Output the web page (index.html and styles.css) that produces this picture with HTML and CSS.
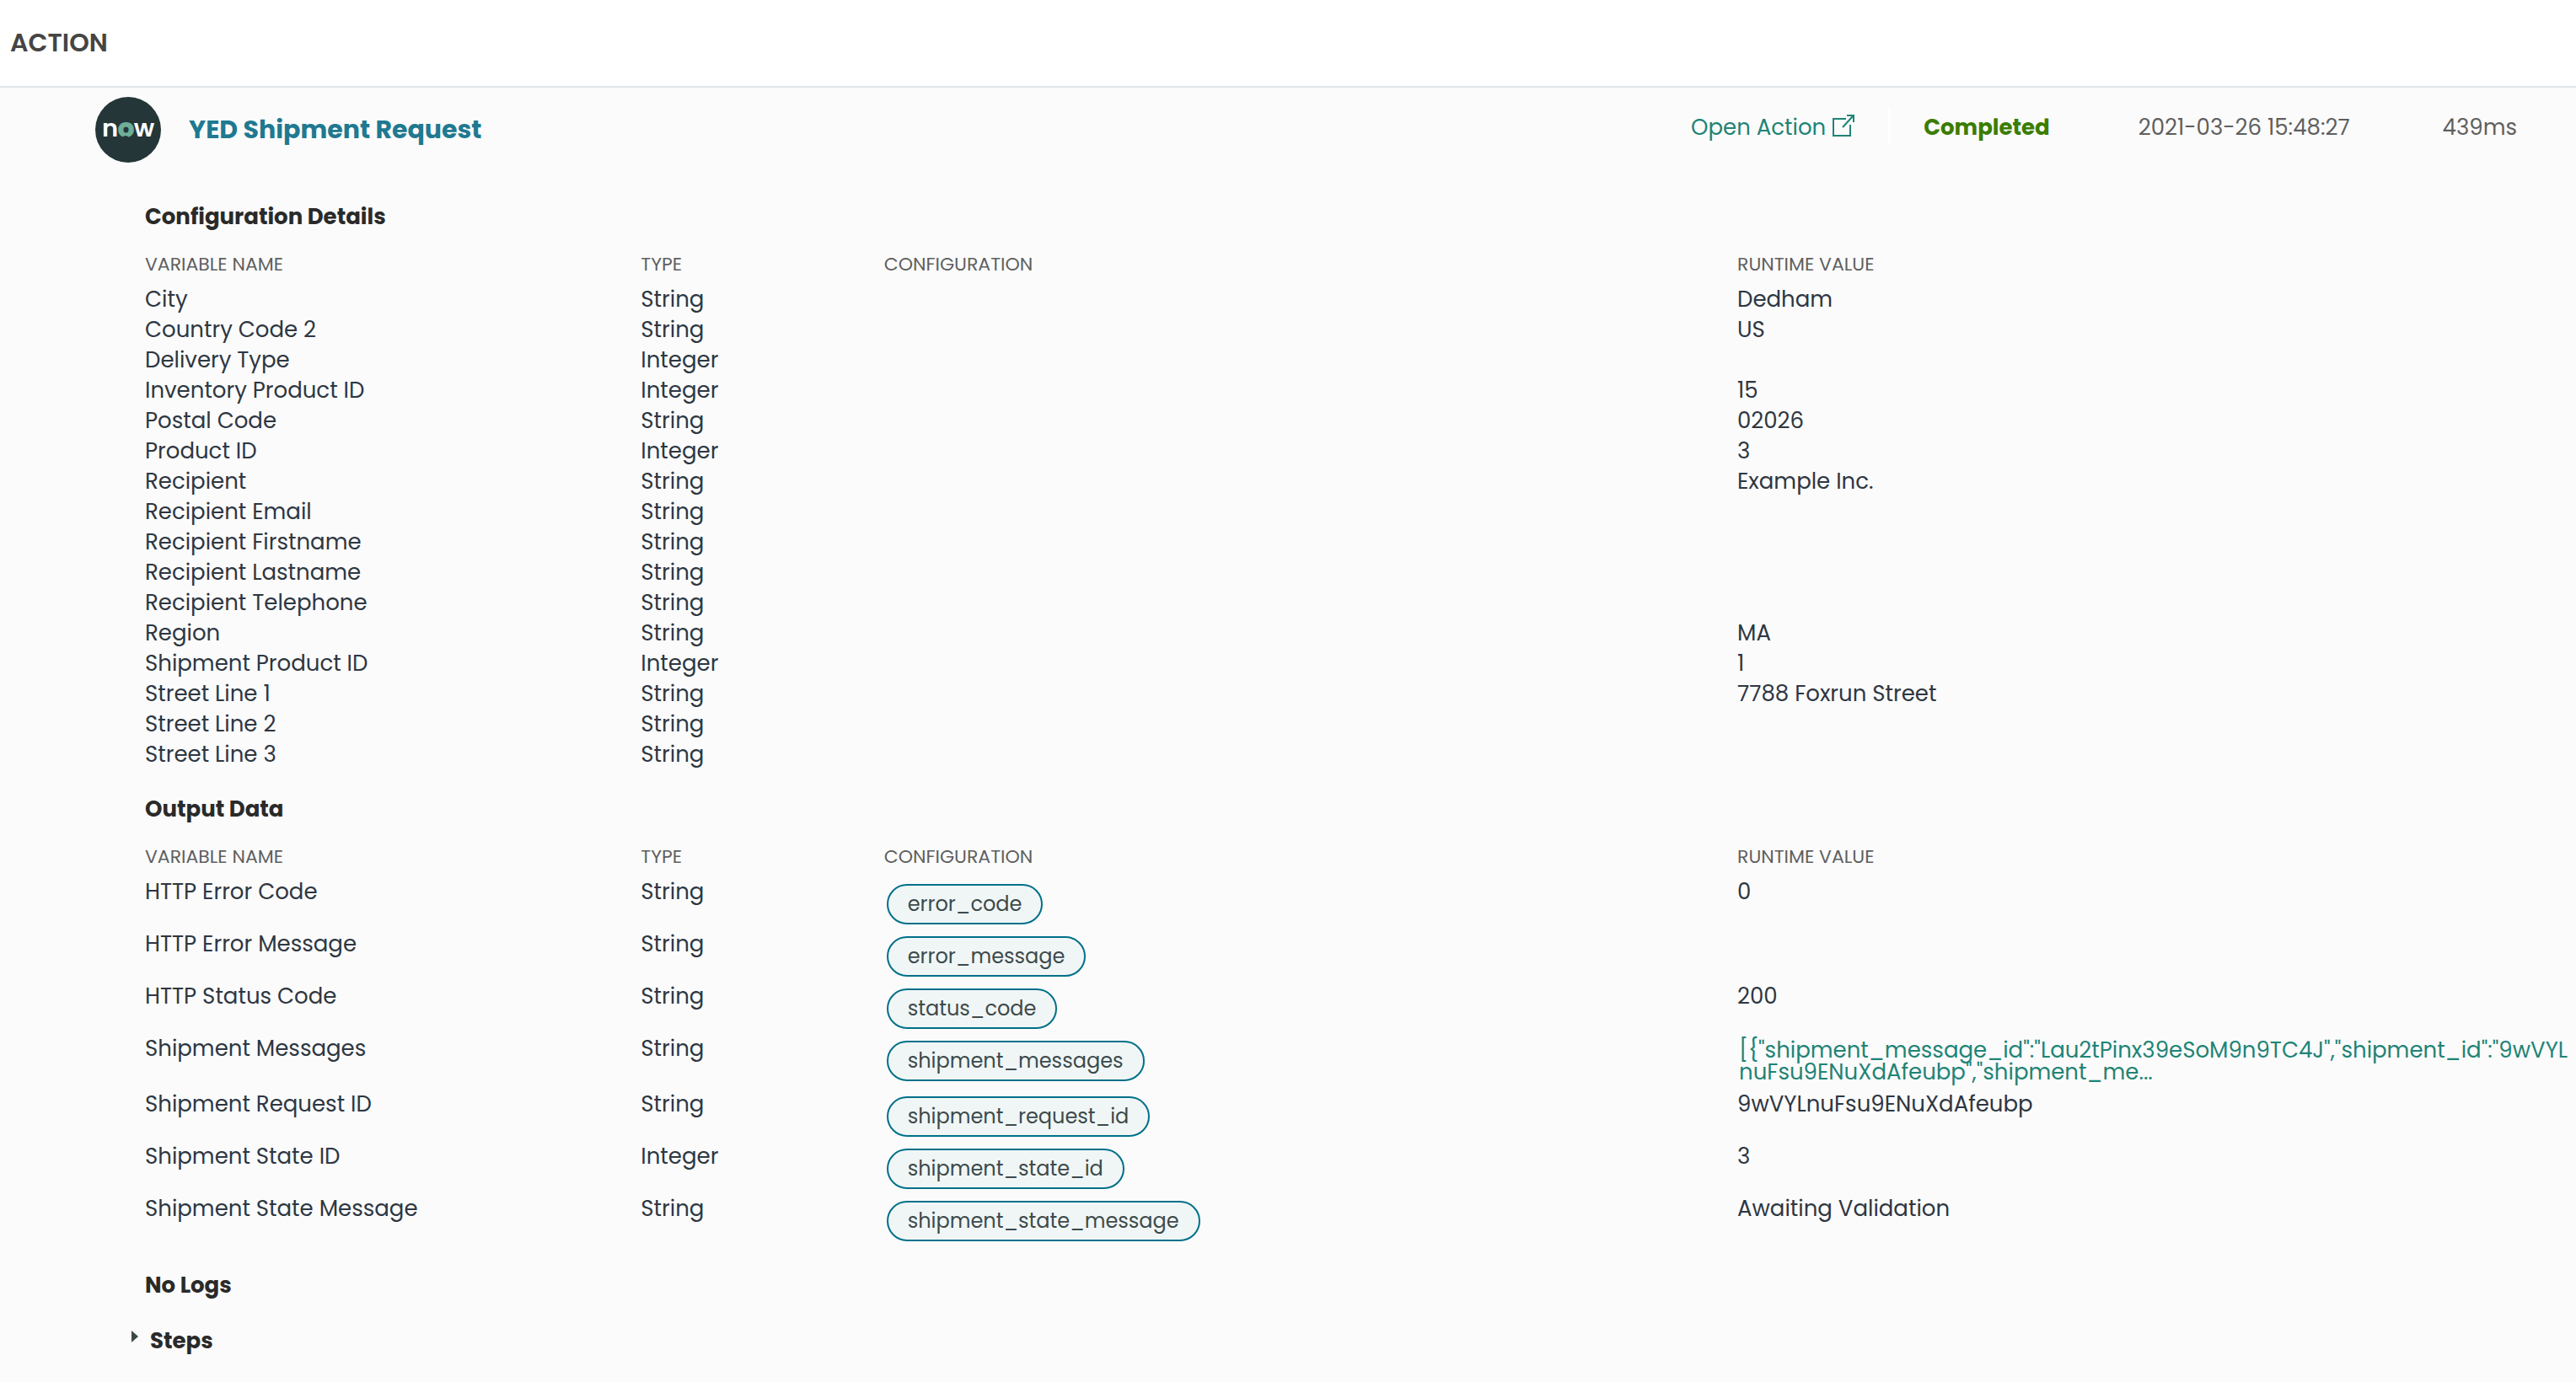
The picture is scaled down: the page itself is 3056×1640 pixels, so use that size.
FILE: index.html
```html
<!DOCTYPE html>
<html lang="en">
<head>
<meta charset="utf-8">
<title>Action – YED Shipment Request</title>
<link rel="stylesheet" href="styles.css">
</head>
<body>
<header class="page-header">
  <h1 class="page-title">ACTION</h1>
</header>
<main class="action">
  <div class="action-bar">
    <svg class="logo" viewBox="0 0 78 78" role="img" aria-label="now">
      <circle cx="39" cy="39" r="39" fill="#243638"/>
      <text class="logo-text" x="8" y="47">n<tspan class="logo-o">o</tspan>w</text>
      <path d="M31 49Q36 43 41 49Z" fill="#243638"/>
    </svg>
    <h2 class="action-name">YED Shipment Request</h2>
    <div class="action-meta">
      <a class="open-action" href="#">Open Action
        <svg class="open-icon" viewBox="0 0 26 26" aria-hidden="true">
          <path d="M16 5H1V25H21V12M12 15L24 2M17 1H25V9" fill="none" stroke="#1f8476" stroke-width="2"/>
        </svg>
      </a>
      <span class="status">Completed</span>
      <time class="started" datetime="2021-03-26T15:48:27">2021-03-26 15:48:27</time>
      <span class="duration">439ms</span>
    </div>
  </div>

  <div class="details">
    <section class="section">
      <h3 class="section-title">Configuration Details</h3>
      <table class="vars">
        <thead>
          <tr><th class="col-name">VARIABLE NAME</th><th class="col-type">TYPE</th><th class="col-config">CONFIGURATION</th><th>RUNTIME VALUE</th></tr>
        </thead>
        <tbody>
          <tr><td>City</td><td>String</td><td></td><td>Dedham</td></tr>
          <tr><td>Country Code 2</td><td>String</td><td></td><td>US</td></tr>
          <tr><td>Delivery Type</td><td>Integer</td><td></td><td></td></tr>
          <tr><td>Inventory Product ID</td><td>Integer</td><td></td><td>15</td></tr>
          <tr><td>Postal Code</td><td>String</td><td></td><td>02026</td></tr>
          <tr><td>Product ID</td><td>Integer</td><td></td><td>3</td></tr>
          <tr><td>Recipient</td><td>String</td><td></td><td>Example Inc.</td></tr>
          <tr><td>Recipient Email</td><td>String</td><td></td><td></td></tr>
          <tr><td>Recipient Firstname</td><td>String</td><td></td><td></td></tr>
          <tr><td>Recipient Lastname</td><td>String</td><td></td><td></td></tr>
          <tr><td>Recipient Telephone</td><td>String</td><td></td><td></td></tr>
          <tr><td>Region</td><td>String</td><td></td><td>MA</td></tr>
          <tr><td>Shipment Product ID</td><td>Integer</td><td></td><td>1</td></tr>
          <tr><td>Street Line 1</td><td>String</td><td></td><td>7788 Foxrun Street</td></tr>
          <tr><td>Street Line 2</td><td>String</td><td></td><td></td></tr>
          <tr><td>Street Line 3</td><td>String</td><td></td><td></td></tr>
        </tbody>
      </table>
    </section>

    <section class="section">
      <h3 class="section-title">Output Data</h3>
      <table class="vars">
        <thead>
          <tr><th class="col-name">VARIABLE NAME</th><th class="col-type">TYPE</th><th class="col-config">CONFIGURATION</th><th>RUNTIME VALUE</th></tr>
        </thead>
        <tbody>
          <tr><td>HTTP Error Code</td><td>String</td><td><span class="pill">error_code</span></td><td>0</td></tr>
          <tr><td>HTTP Error Message</td><td>String</td><td><span class="pill">error_message</span></td><td></td></tr>
          <tr><td>HTTP Status Code</td><td>String</td><td><span class="pill">status_code</span></td><td>200</td></tr>
          <tr><td>Shipment Messages</td><td>String</td><td><span class="pill">shipment_messages</span></td><td><a class="json-link" href="#">[{"shipment_message_id":"Lau2tPinx39eSoM9n9TC4J","shipment_id":"9wVYL<wbr>nuFsu9ENuXdAfeubp","shipment_me...</a></td></tr>
          <tr><td>Shipment Request ID</td><td>String</td><td><span class="pill">shipment_request_id</span></td><td>9wVYLnuFsu9ENuXdAfeubp</td></tr>
          <tr><td>Shipment State ID</td><td>Integer</td><td><span class="pill">shipment_state_id</span></td><td>3</td></tr>
          <tr><td>Shipment State Message</td><td>String</td><td><span class="pill">shipment_state_message</span></td><td>Awaiting Validation</td></tr>
        </tbody>
      </table>
    </section>

    <h3 class="section-title">No Logs</h3>
    <h3 class="section-title steps">
      <button class="steps-toggle" type="button" aria-expanded="false"><span class="caret"></span>Steps</button>
    </h3>
  </div>
</main>
</body>
</html>
```
FILE: styles.css
```css
* { box-sizing: border-box; }

body {
  margin: 0;
  min-height: 100vh;
  background: #fbfbfb;
  color: #2e3742;
  font-family: Poppins, Inter, "Noto Sans", sans-serif;
  font-size: 26px;
  line-height: 36px;
}

h1, h2, h3 { margin: 0; }
a { color: #1f8476; text-decoration: none; }

.page-header {
  display: flex;
  align-items: center;
  height: 104px;
  padding-left: 12px;
  background: #fff;
  border-bottom: 2px solid #dfe4e9;
}
.page-title { font-size: 30px; font-weight: 600; color: #454545; }

.action-bar {
  display: flex;
  align-items: center;
  height: 100px;
  padding-left: 113px;
}
.logo { width: 78px; height: 78px; flex: none; }
.logo-text { font-size: 29px; font-weight: 600; fill: #fff; }
.logo-o { fill: #6fae96; stroke: #6fae96; stroke-width: 2px; }
.action-name {
  flex: 1;
  padding-left: 33px;
  font-size: 30px;
  font-weight: 700;
  color: #1f7990;
}
.action-meta {
  display: flex;
  align-items: center;
  padding-bottom: 6px;
  color: #5f5f5f;
}
.open-action {
  display: flex;
  align-items: center;
  gap: 8px;
  height: 44px;
  padding-right: 40px;
  border-right: 2px solid #fff;
}
.open-icon { width: 26px; height: 26px; margin-bottom: 4px; }
.status { padding-left: 40px; font-weight: 700; color: #3a7d00; }
.started { padding-left: 105px; }
.duration { padding: 0 70px 0 110px; }

.details { padding: 35px 0 28px 172px; }
.section { margin-bottom: 29px; }
.section-title {
  font-size: 26px;
  line-height: 36px;
  font-weight: 700;
  color: #2a2a2a;
}

.vars {
  width: 100%;
  margin-top: 8px;
  table-layout: fixed;
  border-collapse: collapse;
}
.vars th, .vars td {
  padding: 0;
  text-align: left;
  vertical-align: top;
}
.vars th {
  height: 54px;
  padding-top: 18px;
  font-size: 22px;
  line-height: 26px;
  font-weight: 400;
  color: #5f5f5f;
}
.vars td { height: 36px; }
.col-name { width: 20.4%; }
.col-type { width: 10%; }
.col-config { width: 35.1%; }

.pill {
  display: block;
  width: fit-content;
  margin: 9px 0 5px 3px;
  padding: 0 23px;
  border: 2px solid #00708a;
  border-radius: 24px;
  background: #f0f6f6;
  color: #3d4a4b;
  font-size: 24px;
  line-height: 44px;
}
.json-link {
  display: block;
  padding: 7px 2px;
  line-height: 26px;
}

.steps { margin-top: 30px; }
.steps-toggle {
  display: flex;
  gap: 14px;
  margin-left: -16px;
  padding: 0;
  border: 0;
  background: none;
  color: inherit;
  font: inherit;
}
.caret {
  margin-top: 6px;
  height: 14px;
  border: 7px solid transparent;
  border-left: 8px solid #3b4848;
  border-right: 0;
}
```
